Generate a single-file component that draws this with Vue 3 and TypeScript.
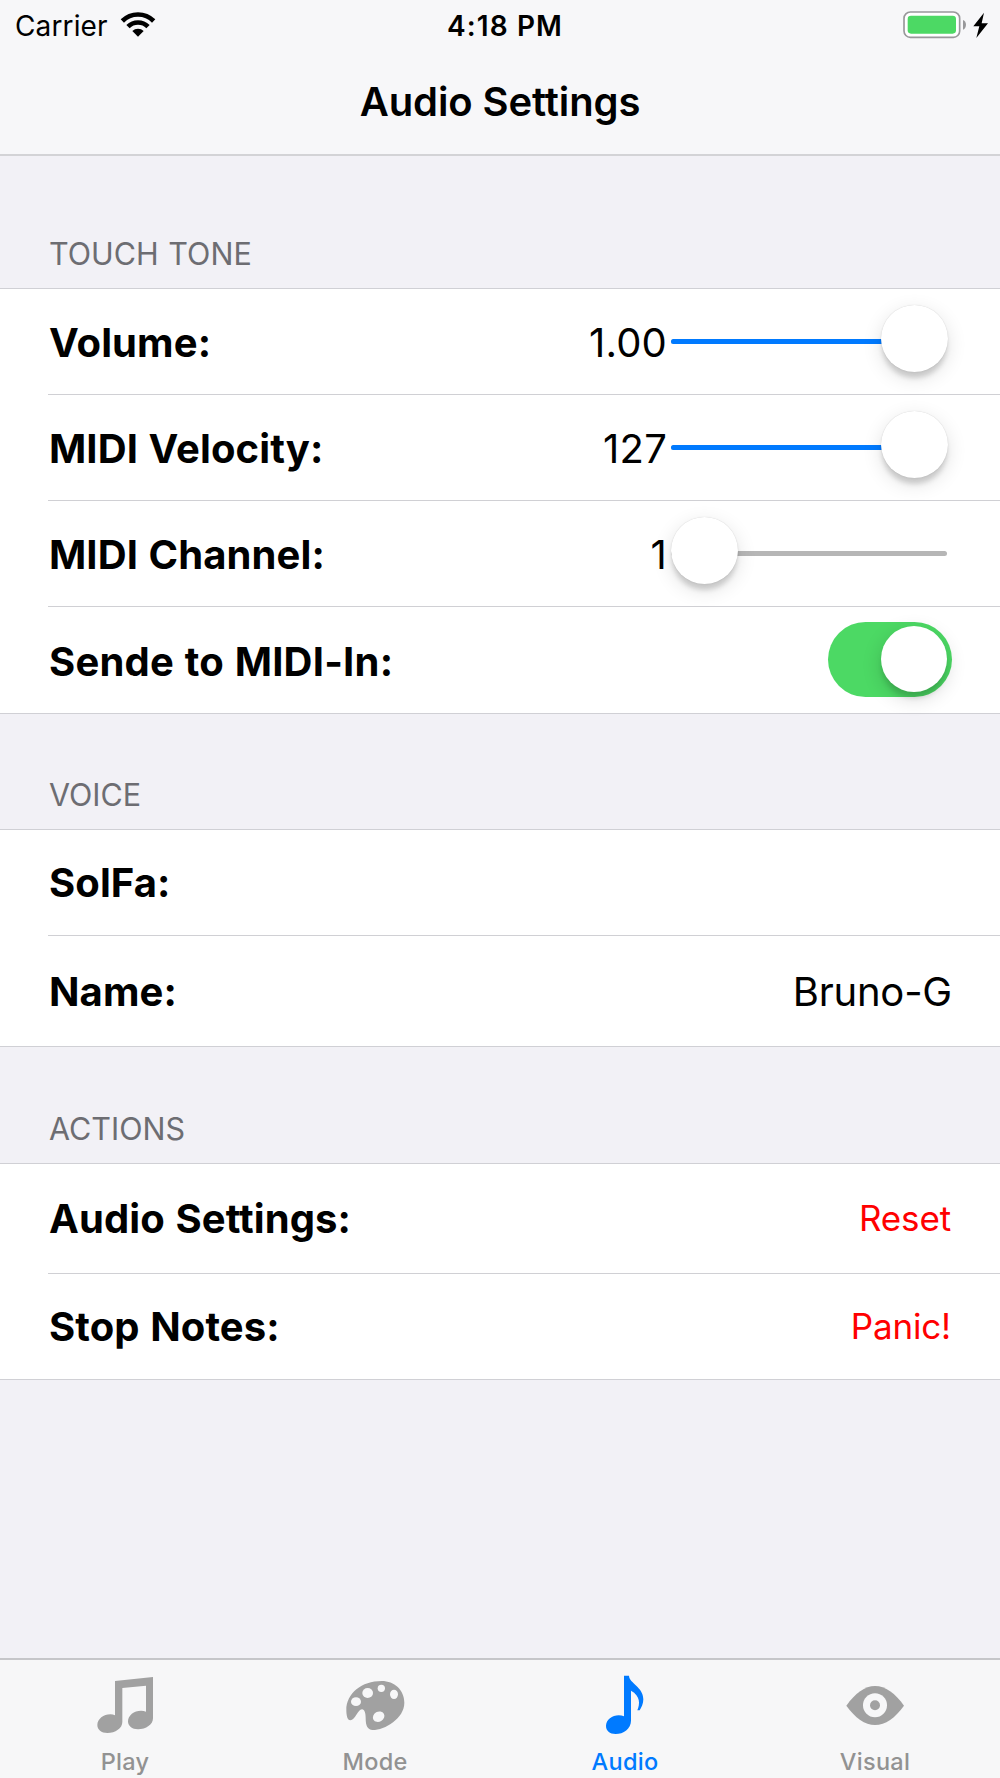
<script setup lang="ts">
import { ref } from 'vue'

interface Row {
  label: string
  kind: 'slider' | 'switch' | 'text' | 'action'
  value?: string
  position?: number
  height: number
}

interface Section {
  title: string
  height: number
  rows: Row[]
}

const sendToMidiIn = ref(true)
const activeTab = ref('Audio')

const sections = ref<Section[]>([
  {
    title: 'TOUCH TONE',
    height: 132,
    rows: [
      { label: 'Volume:', kind: 'slider', value: '1.00', position: 1, height: 106 },
      { label: 'MIDI Velocity:', kind: 'slider', value: '127', position: 1, height: 106 },
      { label: 'MIDI Channel:', kind: 'slider', value: '1', position: 0, height: 106 },
      { label: 'Sende to MIDI-In:', kind: 'switch', height: 106 }
    ]
  },
  {
    title: 'VOICE',
    height: 115,
    rows: [
      { label: 'SolFa:', kind: 'text', value: '', height: 106 },
      { label: 'Name:', kind: 'text', value: 'Bruno-G', height: 110 }
    ]
  },
  {
    title: 'ACTIONS',
    height: 116,
    rows: [
      { label: 'Audio Settings:', kind: 'action', value: 'Reset', height: 110 },
      { label: 'Stop Notes:', kind: 'action', value: 'Panic!', height: 105 }
    ]
  }
])

const tabs = ['Play', 'Mode', 'Audio', 'Visual']
</script>

<template>
  <div class="screen">
    <header class="header">
      <div class="status">
        <div class="carrier">
          <span>Carrier</span>
          <svg class="wifi" viewBox="360 33 108 81">
            <g fill="none" stroke="#000" stroke-width="14">
              <path d="M367 63A66.5 66.5 0 0 1 461 63" />
              <path d="M384 80A42.5 42.5 0 0 1 444 80" />
            </g>
            <path d="M397 93A24 24 0 0 1 431 93L414 110Z" />
          </svg>
        </div>
        <div class="time">4:18 PM</div>
        <svg class="battery" viewBox="306 28 264 88">
          <rect x="312" y="34" width="167" height="76" rx="19" fill="#fff" stroke="#98989a" stroke-width="5" />
          <rect x="323" y="45" width="145" height="54" rx="10" fill="#4cd964" />
          <path d="M489 58C501 61 501 83 489 87Z" fill="#98989a" />
          <path d="M552 36L520 77H538L529 112L564 68H545Z" />
        </svg>
      </div>
      <h1 class="title">Audio Settings</h1>
    </header>

    <main class="content">
      <section v-for="section in sections" :key="section.title">
        <h2 class="heading" :style="{ height: section.height + 'px' }">{{ section.title }}</h2>
        <div class="group">
          <div
            v-for="row in section.rows"
            :key="row.label"
            class="row"
            :class="row.kind"
            :style="{ height: row.height + 'px' }"
          >
            <span class="label">{{ row.label }}</span>
            <template v-if="row.kind === 'slider'">
              <span class="value">{{ row.value }}</span>
              <div class="track">
                <div class="fill" :style="{ width: row.position! * 100 + '%' }"></div>
                <div class="thumb" :style="{ left: `calc((100% - 66px) * ${row.position})` }"></div>
              </div>
            </template>
            <button
              v-else-if="row.kind === 'switch'"
              class="toggle"
              :class="{ on: sendToMidiIn }"
              @click="sendToMidiIn = !sendToMidiIn"
            >
              <span class="knob"></span>
            </button>
            <button v-else-if="row.kind === 'action'" class="link">{{ row.value }}</button>
            <span v-else class="value">{{ row.value }}</span>
          </div>
        </div>
      </section>
    </main>

    <nav class="tabs">
      <button
        v-for="tab in tabs"
        :key="tab"
        class="tab"
        :class="{ active: tab === activeTab }"
        @click="activeTab = tab"
      >
        <svg v-if="tab === 'Play'" viewBox="105 72 180 180">
          <path
            d="M165 93L279 81V205C279 224 258 238 234 238C216 238 204 228 204 214C204 196 222 182 243 182C249 182 254 183 258 185V107L187 114V216C187 235 166 249 142 249C124 249 112 239 112 225C112 207 131 193 151 193C156 193 161 194 165 196Z"
          />
        </svg>
        <svg v-else-if="tab === 'Mode'" viewBox="855 72 180 180">
          <path
            d="M859 180C859 130 905 93 965 93C1003 93 1033 120 1033 158C1033 205 975 240 938 240C922 240 917 226 917 205C917 190 914 178 906 178C893 178 886 211 871 211C862 211 859 196 859 180Z"
          />
          <g class="hole">
            <ellipse cx="888" cy="155" rx="15" ry="13" />
            <ellipse cx="923" cy="129" rx="16" ry="15" />
            <circle cx="964" cy="115" r="11" />
            <ellipse cx="1002" cy="133" rx="12" ry="14" />
            <ellipse cx="956" cy="200" rx="18" ry="15" transform="rotate(-30 956 200)" />
          </g>
        </svg>
        <svg v-else-if="tab === 'Audio'" viewBox="165 72 180 180">
          <path
            d="M252 77H267C268 100 310 110 310 148C310 162 304 172 299 181H292C300 162 302 138 273 122V212C273 236 250 252 227 252C209 252 198 242 198 228C198 209 217 196 236 196C242 196 247 197 252 199Z"
          />
        </svg>
        <svg v-else viewBox="915 72 180 180">
          <path
            d="M919 167C945 130 975 108 1005 108C1036 108 1066 130 1092 167C1066 203 1036 225 1005 225C975 225 945 203 919 167Z"
          />
          <circle class="hole" cx="1005" cy="166" r="36" />
          <circle cx="1005" cy="166" r="15" />
        </svg>
        <span>{{ tab }}</span>
      </button>
    </nav>
  </div>
</template>

<style>
body {
  margin: 0;
}
</style>

<style scoped>
.screen {
  display: flex;
  flex-direction: column;
  width: 1000px;
  height: 1778px;
  overflow: hidden;
  background: #f2f1f6;
  color: #000;
  font-family: Inter, 'Liberation Sans', sans-serif;
}

button {
  padding: 0;
  border: none;
  background: none;
  font-family: inherit;
  cursor: pointer;
}

.header {
  box-sizing: border-box;
  height: 156px;
  border-bottom: 2px solid #d3d3d6;
  background: #f7f7f9;
}

.status {
  display: grid;
  grid-template-columns: 1fr auto 1fr;
  align-items: center;
  height: 51px;
  padding: 0 10px 0 15px;
  font-size: 28px;
  line-height: 49px;
}

.carrier {
  display: flex;
  align-items: center;
  gap: 12px;
  letter-spacing: 0.13px;
}

.carrier span,
.time {
  padding-top: 2px;
}

.wifi {
  width: 36px;
  height: 27px;
  margin-bottom: 2px;
}

.time {
  padding-left: 5px;
  font-weight: 600;
  letter-spacing: 1.1px;
}

.battery {
  justify-self: end;
  width: 88px;
  height: 29.33px;
  margin-bottom: 2px;
}

.title {
  margin: 0;
  font-size: 40px;
  font-weight: 600;
  line-height: 102px;
  letter-spacing: -0.1px;
  text-align: center;
}

.content {
  flex: 1;
}

.heading {
  box-sizing: border-box;
  display: flex;
  align-items: flex-end;
  margin: 0;
  padding: 0 49px 14px;
  color: #6d6d72;
  font-size: 30.5px;
  font-weight: 400;
  line-height: 40px;
  word-spacing: 1px;
}

.group {
  padding-left: 48px;
  border-top: 1px solid #d0d0d5;
  border-bottom: 1px solid #d0d0d5;
  background: #fff;
}

.row {
  box-sizing: border-box;
  display: flex;
  align-items: center;
  padding: 0 48px 0 1px;
  font-size: 40px;
  line-height: 48px;
}

.row:not(:last-child) {
  border-bottom: 1px solid #d0d0d4;
}

.row.slider {
  padding-right: 53px;
}

.label {
  flex: 1;
  padding-top: 1px;
  font-weight: 700;
  letter-spacing: 0.1px;
  word-spacing: 1px;
}

.slider .label,
.slider .value {
  padding-top: 2px;
}

.switch .label {
  padding-top: 3px;
  letter-spacing: 0.22px;
}

.value {
  padding-top: 1px;
  letter-spacing: -0.2px;
}

.slider .value {
  letter-spacing: 0.2px;
}

.link {
  padding: 0 1px 2px 0;
  color: #f00;
  font-size: 35px;
  letter-spacing: -0.15px;
}

.track {
  position: relative;
  width: 276px;
  height: 5px;
  margin-left: 4px;
  border-radius: 3px;
  background: #b6b6b6;
}

.fill {
  width: 100%;
  height: 100%;
  border-radius: 3px;
  background: #007aff;
}

.thumb {
  position: absolute;
  top: -34px;
  width: 67px;
  height: 67px;
  border-radius: 50%;
  background: #fff;
  box-shadow: 0 0 1px rgba(0, 0, 0, 0.2), 0 7px 5px -1px rgba(0, 0, 0, 0.15), 0 6px 20px rgba(0, 0, 0, 0.12);
}

.toggle {
  box-sizing: border-box;
  display: flex;
  width: 124px;
  height: 75px;
  margin-bottom: 1px;
  padding: 4px 5px;
  border-radius: 38px;
  background: #e5e5ea;
}

.toggle.on {
  justify-content: flex-end;
  background: #4cd964;
}

.knob {
  width: 66px;
  height: 66px;
  border-radius: 50%;
  background: #fff;
  box-shadow: 0 7px 5px -1px rgba(0, 0, 0, 0.12), 0 6px 20px rgba(0, 0, 0, 0.16);
}

.tabs {
  box-sizing: border-box;
  display: grid;
  grid-template-columns: repeat(4, 1fr);
  height: 120px;
  border-top: 2px solid #c6c6c9;
  background: #f7f7f8;
}

.tab {
  display: flex;
  flex-direction: column;
  align-items: center;
  padding-top: 14px;
  color: #929292;
  font-size: 23.5px;
  font-weight: 500;
  line-height: 28px;
  letter-spacing: 0.3px;
}

.tab svg {
  width: 60px;
  height: 60px;
  margin-bottom: 14px;
  fill: #a1a1a1;
}

.tab .hole {
  fill: #f7f7f8;
}

.tab.active {
  color: #007aff;
}

.tab.active svg {
  fill: #007aff;
}
</style>
